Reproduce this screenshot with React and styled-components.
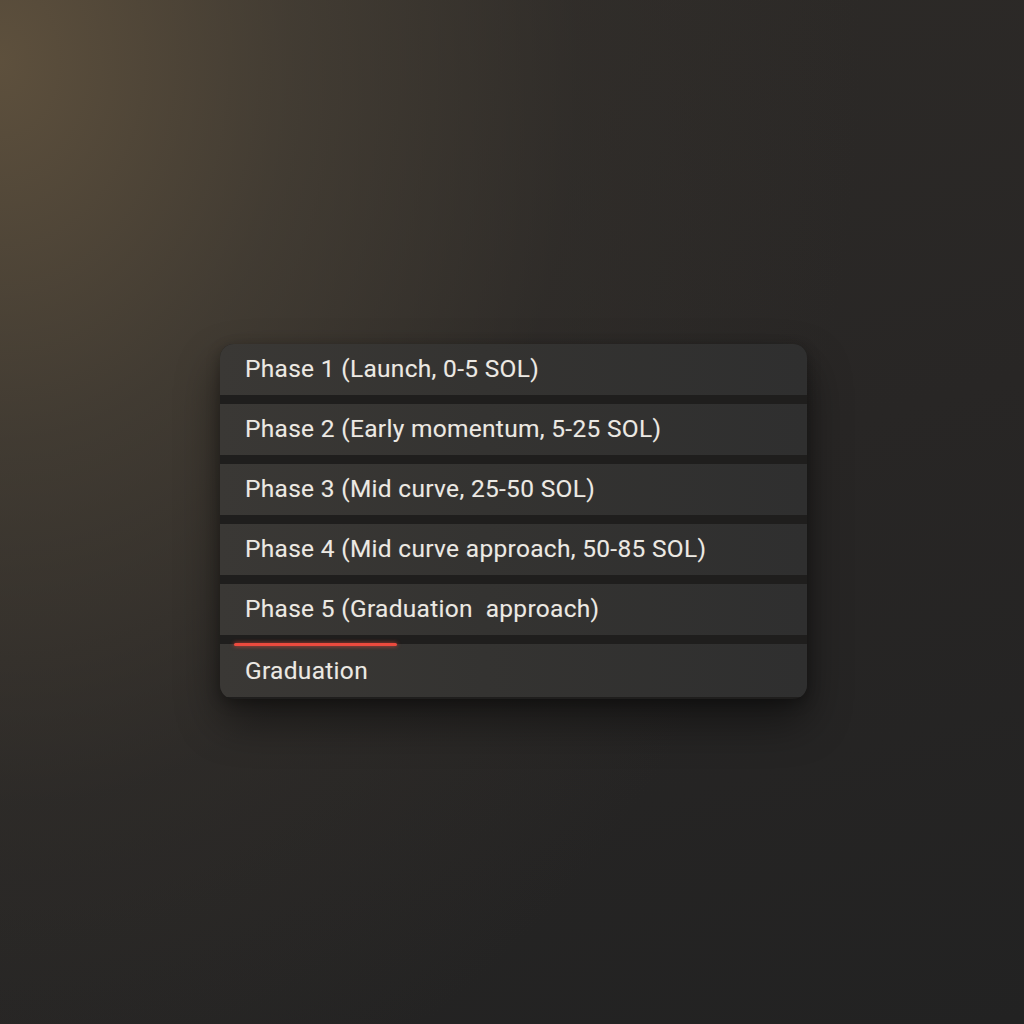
import React from "react";
import styled, { createGlobalStyle } from "styled-components";

const Global = createGlobalStyle`
  html, body { margin: 0; padding: 0; }
  body {
    background: #262524;
    font-family: Roboto, Inter, "Noto Sans", sans-serif;
  }
`;

const Page = styled.div`
  width: 1024px;
  height: 1024px;
  display: flex;
  justify-content: center;
  padding-top: 344px;
  box-sizing: border-box;
  background:
    radial-gradient(ellipse 1050px 1350px at 0% 6%, rgba(96, 82, 62, 0.95) 0%, rgba(76, 68, 56, 0.68) 28%, rgba(54, 50, 45, 0.4) 55%, rgba(38, 37, 36, 0) 82%),
    linear-gradient(165deg, #2e2b28 0%, #282625 50%, #222222 100%);
`;

const Card = styled.div`
  position: relative;
  width: 587px;
  height: 355px;
  margin-left: 3px;
  display: flex;
  flex-direction: column;
  gap: 9px;
  border-radius: 14px;
  overflow: hidden;
  background: #1f1e1d;
  box-shadow: 0 22px 44px rgba(0, 0, 0, 0.45), 0 4px 14px rgba(0, 0, 0, 0.3);
`;

const Row = styled.div`
  position: relative;
  flex: 0 0 ${(p) => (p.$last ? 53 : 51)}px;
  display: flex;
  align-items: center;
  padding-left: 25px;
  padding-bottom: ${(p) => (p.$last ? 0 : 3)}px;
  box-sizing: border-box;
  background: linear-gradient(90deg, #3a3835 0%, #343331 45%, #2f2f2f 100%);
  color: #ece9e3;
  font-size: 24.5px;
  letter-spacing: 0.3px;
  white-space: pre;
  text-shadow: 0 0 1px rgba(255, 255, 255, 0.18);
`;

const Marker = styled.div`
  position: absolute;
  left: 14px;
  top: -1px;
  width: 163px;
  height: 3px;
  border-radius: 2px;
  background: #ec4a3e;
  box-shadow: 0 0 4px rgba(236, 74, 62, 0.8);
`;

const phases = [
  "Phase 1 (Launch, 0-5 SOL)",
  "Phase 2 (Early momentum, 5-25 SOL)",
  "Phase 3 (Mid curve, 25-50 SOL)",
  "Phase 4 (Mid curve approach, 50-85 SOL)",
  "Phase 5 (Graduation  approach)",
];

export default function App() {
  return (
    <>
      <Global />
      <Page>
        <Card>
          {phases.map((t) => (
            <Row key={t}>{t}</Row>
          ))}
          <Row $last>
            <Marker />
            Graduation
          </Row>
        </Card>
      </Page>
    </>
  );
}
